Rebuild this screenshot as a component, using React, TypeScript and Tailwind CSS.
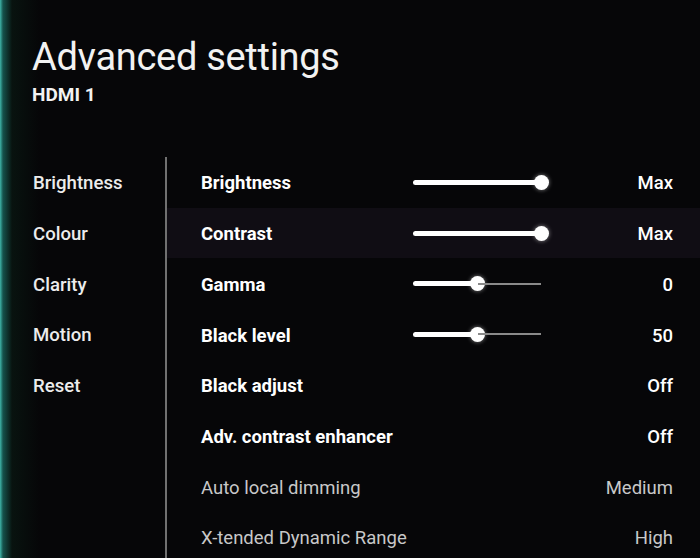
import React from 'react'

type Row = {
  label: string
  value: string
  slider?: number
  dim?: boolean
  active?: boolean
}

const rows: Row[] = [
  { label: 'Brightness', value: 'Max', slider: 1 },
  { label: 'Contrast', value: 'Max', slider: 1, active: true },
  { label: 'Gamma', value: '0', slider: 0.5 },
  { label: 'Black level', value: '50', slider: 0.5 },
  { label: 'Black adjust', value: 'Off' },
  { label: 'Adv. contrast enhancer', value: 'Off' },
  { label: 'Auto local dimming', value: 'Medium', dim: true },
  { label: 'X-tended Dynamic Range', value: 'High', dim: true },
]

const menu = ['Brightness', 'Colour', 'Clarity', 'Motion', 'Reset']

const Slider = ({ pct }: { pct: number }) => {
  return (
    <div className="flex items-center w-[128px] h-4">
      <div className="h-[5px] bg-white rounded-full shrink-0" style={{ width: pct * 128 }} />
      <div className="w-[15px] h-[15px] rounded-full bg-white shrink-0 -ml-[7px] -mr-[7px] shadow-[0_0_4px_rgba(255,255,255,0.5)]" />
      <div className="flex-1 h-[2px] bg-[#8a8a8a]" />
    </div>
  )
}

const App = () => {
  return (
    <div
      className="w-[700px] h-[558px] overflow-hidden text-[#f2f2f2] bg-[linear-gradient(to_right,#3fb5a8_0px,#15524b_3px,#08130f_12px,#060608_40px)]"
      style={{ fontFamily: 'Roboto, "Noto Sans", sans-serif' }}
    >
      <div className="pl-8 pt-[38px]">
        <h1 className="text-[38px] leading-none font-normal tracking-[-0.3px]">Advanced settings</h1>
        <div className="mt-[9px] text-[19px] leading-none font-bold">HDMI 1</div>
      </div>

      <div className="flex mt-[53px] h-[420px]">
        <div className="w-[165px] shrink-0">
          {menu.map((m) => (
            <div key={m} className="h-[50.7px] flex items-center pl-[33px] pt-[4px] text-[18.6px] font-medium text-[#ececec]">
              {m}
            </div>
          ))}
        </div>
        <div className="w-[2px] bg-[#707070] shrink-0" />
        <div className="flex-1">
          {rows.map((r) => (
            <div
              key={r.label}
              className={`h-[50.7px] flex items-center text-[18.5px] ${r.active ? 'bg-[#100d14]' : ''} ${r.dim ? 'text-[#c8c8c8] font-normal' : 'text-white font-bold'}`}
            >
              <div className="w-[246px] pl-[34px] pt-[4px] shrink-0">{r.label}</div>
              <div className="w-[128px] shrink-0">{r.slider !== undefined && <Slider pct={r.slider} />}</div>
              <div className={`flex-1 text-right pr-[27px] pt-[4px] ${r.dim ? '' : 'font-medium'}`}>{r.value}</div>
            </div>
          ))}
        </div>
      </div>
    </div>
  )
}

export default App
